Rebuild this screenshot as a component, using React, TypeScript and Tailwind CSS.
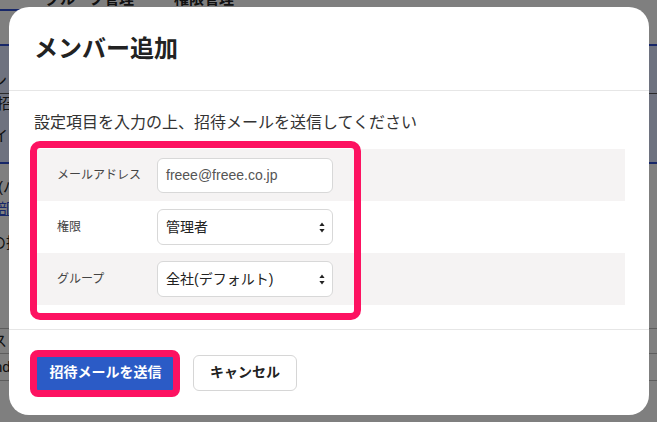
import React from "react";

const FONT = "font-['Liberation_Sans','Noto_Sans_CJK_JP',sans-serif]";

function Arrows() {
  return (
    <svg width="6" height="11" viewBox="0 0 6 11" className="shrink-0">
      <path d="M3 0.5 L5.6 4 L0.4 4 Z" fill="#222" />
      <path d="M3 10.5 L5.6 7 L0.4 7 Z" fill="#222" />
    </svg>
  );
}

function Background() {
  return (
    <div className="flex flex-col w-full h-full text-[#222] text-[15px]">
      <div className="h-[44px] flex items-start gap-[40px] pl-[45px] relative">
        <span className="-mt-[11px] font-bold leading-[20px]">グループ管理</span>
        <span className="-mt-[11px] font-bold leading-[20px]">権限管理</span>
        <div className="absolute left-0 top-[9px] w-[30px] h-[2px] bg-[#2f4fd0]" />
      </div>
      <div className="h-[120px] bg-[#dce4fe] border-y-2 border-[#2f4fd0] flex flex-col">
        <div className="h-[48px] border-b border-[#555] flex flex-col justify-end -ml-[8px] pb-[2px] leading-[20px]">
          <span>ン</span>
        </div>
        <div className="-ml-[3px] leading-[20px]">招</div>
        <div className="mt-[12px] -ml-[7px] leading-[20px]">イ</div>
      </div>
      <div className="flex flex-col pt-[12px] leading-[22px]">
        <span className="-ml-[2px]">(バ</span>
        <span className="-ml-[2px] text-[#2f4fd0] underline">部</span>
        <span className="mt-[12px] -ml-[9px]">の招</span>
      </div>
      <div className="mt-[74px] border-t border-[#bbb]" />
      <div className="h-[24px] flex items-center -ml-[8px]">ス</div>
      <div className="border-t border-[#bbb]" />
      <div className="h-[26px] flex items-center -ml-[6px]">nd</div>
      <div className="border-t border-[#bbb]" />
    </div>
  );
}

export default function App() {
  return (
    <div className={`relative w-[657px] h-[422px] overflow-hidden bg-white ${FONT}`}>
      <Background />
      <div className="absolute inset-0 bg-black/50" />
      <div className="absolute left-[9px] top-[7px] w-[640px] h-[408px] rounded-[20px] bg-white flex flex-col">
        <div className="h-[84px] shrink-0 flex items-center px-[25px] border-b border-[#e6e6e6]">
          <h1 className="text-[24px] font-bold text-[#222] leading-none">メンバー追加</h1>
        </div>
        <div className="pt-[20px] pl-[25px] pr-[24px] pb-[24px] border-b border-[#e6e6e6]">
          <p className="text-[16px] leading-[24px] text-[#333]">設定項目を入力の上、招待メールを送信してください</p>
          <div className="mt-[14px] flex flex-col">
            <div className="h-[52px] bg-[#f5f3f3] flex items-center">
              <div className="w-[123px] pl-[23px] text-[12px] text-[#444]">メールアドレス</div>
              <div className="w-[176px] h-[35px] rounded-[6px] border border-[#d8d8d8] bg-white flex items-center pl-[8px] text-[14px] text-[#555]">
                freee@freee.co.jp
              </div>
            </div>
            <div className="h-[52px] bg-white flex items-center">
              <div className="w-[123px] pl-[23px] text-[12px] text-[#444]">権限</div>
              <div className="w-[176px] h-[36px] rounded-[6px] border border-[#d8d8d8] bg-white flex items-center justify-between pl-[8px] pr-[7px] text-[14px] text-[#222]">
                <span>管理者</span>
                <Arrows />
              </div>
            </div>
            <div className="h-[52px] bg-[#f5f3f3] flex items-center">
              <div className="w-[123px] pl-[23px] text-[12px] text-[#444]">グループ</div>
              <div className="w-[176px] h-[36px] rounded-[6px] border border-[#d8d8d8] bg-white flex items-center justify-between pl-[8px] pr-[7px] text-[14px] text-[#222]">
                <span>全社(デフォルト)</span>
                <Arrows />
              </div>
            </div>
          </div>
        </div>
        <div className="flex-1 flex items-center gap-[16px] px-[25px]">
          <button className="w-[143px] h-[36px] rounded-[6px] bg-[#2b5bc6] text-white text-[14px] font-bold">
            招待メールを送信
          </button>
          <button className="w-[104px] h-[36px] rounded-[6px] border border-[#d6d6d6] bg-white text-[#222] text-[14px] font-bold">
            キャンセル
          </button>
        </div>
        <div className="absolute left-[21px] top-[134px] w-[331px] h-[179px] border-[7px] border-[#fd1261] rounded-[10px]" />
        <div className="absolute left-[21px] top-[343px] w-[150px] h-[47px] border-[7px] border-[#fd1261] rounded-[8px]" />
      </div>
    </div>
  );
}
